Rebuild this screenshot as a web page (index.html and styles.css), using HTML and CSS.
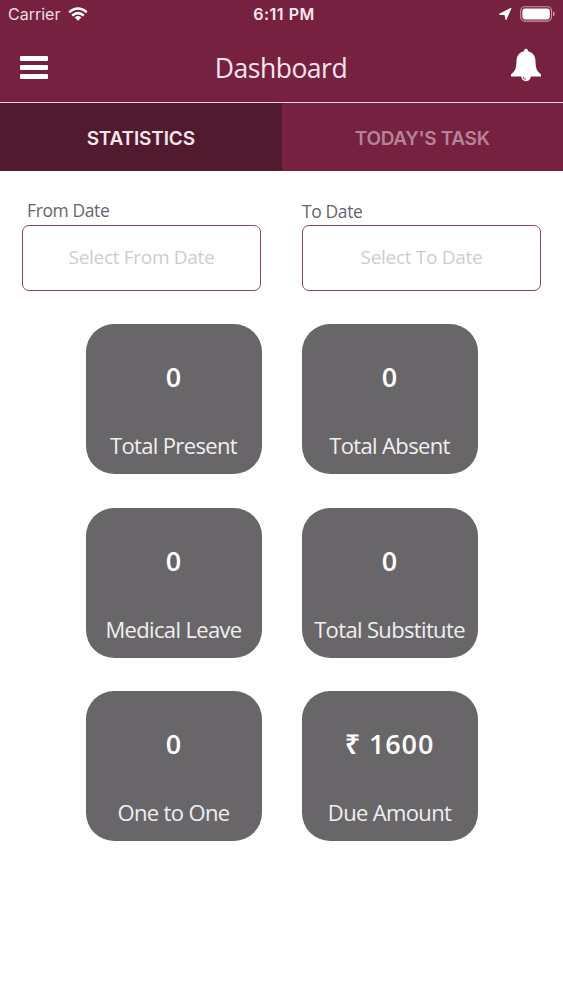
FILE: index.html
```html
<!DOCTYPE html>
<html lang="en">
<head>
    <meta charset="UTF-8">
    <meta name="viewport" content="width=device-width, initial-scale=1.0">
    <title>Dashboard</title>
    <link rel="stylesheet" href="styles.css">
</head>
<body>
    <header class="header">
        <div class="status-bar">
            <div class="status-left">
                <span class="carrier">Carrier</span>
                <svg class="wifi" width="20" height="14" viewBox="0 0 20 14" fill="none" stroke="#fff" stroke-width="2.5">
                    <path d="M1.2 5.2Q10-2.2 18.8 5.2"/>
                    <path d="M4.2 8.6Q10 3.6 15.8 8.6"/>
                    <path d="M6.7 10.4Q10 7.6 13.3 10.4L10 13.8Z" fill="#fff" stroke="none"/>
                </svg>
            </div>
            <span class="time">6:11 PM</span>
            <div class="status-right">
                <svg width="14" height="14" viewBox="0 0 14 14">
                    <path d="M13 1.2L8 12.6 6.9 7.6 1.4 7.2Z" fill="#fff" stroke="#fff" stroke-linejoin="round"/>
                </svg>
                <svg width="36" height="16" viewBox="0 0 36 16">
                    <rect x=".7" y=".7" width="30.8" height="14.4" rx="4" fill="none" stroke="#c798aa" stroke-width="1.1"/>
                    <rect x="2.4" y="2.4" width="27.4" height="11" rx="2.4" fill="#fff"/>
                    <path d="M33 5.3Q34.8 6 34.8 7.9T33 10.5Z" fill="#c798aa"/>
                </svg>
            </div>
        </div>
        <div class="nav-bar">
            <button class="menu-btn" aria-label="Menu">
                <span></span>
                <span></span>
                <span></span>
            </button>
            <h1>Dashboard</h1>
            <button class="bell-btn" aria-label="Notifications">
                <svg width="32" height="34" viewBox="0 0 32 34">
                    <path d="M16 .8C17.3.8 18 1.8 18 3.2C22.7 4.2 25.4 7.8 25.5 13C25.6 20.5 27 23.5 31 26.3V28.5H1V26.3C5 23.5 6.4 20.5 6.5 13C6.6 7.8 9.3 4.2 14 3.2C14 1.8 14.7.8 16 .8Z" fill="#fff"/>
                    <path d="M11.2 28C11.3 31.2 13.3 33.2 16 33.2S20.7 31.2 20.8 28Z" fill="#fff"/>
                    <path d="M13 28.8Q13.3 31.2 15.8 31.4" fill="none" stroke="#76213f" stroke-width=".9"/>
                </svg>
            </button>
        </div>
    </header>

    <nav class="tabs">
        <a class="tab active">STATISTICS</a>
        <a class="tab">TODAY'S TASK</a>
    </nav>

    <main class="content">
        <div class="dates">
            <div class="form-group">
                <label class="from-label">From Date</label>
                <div class="date-input"><span>Select From Date</span></div>
            </div>
            <div class="form-group">
                <label class="to-label">To Date</label>
                <div class="date-input"><span>Select To Date</span></div>
            </div>
        </div>

        <div class="cards">
            <div class="card">
                <strong>0</strong>
                <span>Total Present</span>
            </div>
            <div class="card">
                <strong>0</strong>
                <span>Total Absent</span>
            </div>
            <div class="card">
                <strong>0</strong>
                <span>Medical Leave</span>
            </div>
            <div class="card">
                <strong>0</strong>
                <span>Total Substitute</span>
            </div>
            <div class="card">
                <strong>0</strong>
                <span>One to One</span>
            </div>
            <div class="card">
                <strong class="amount">₹ 1600</strong>
                <span>Due Amount</span>
            </div>
        </div>
    </main>
</body>
</html>
```

FILE: styles.css
```css
* {
    box-sizing: border-box;
}
body {
    margin: 0;
    min-height: 1000px;
    background-color: #fff;
    font-family: "Open Sans", "Noto Sans", sans-serif;
}
.header {
    height: 103px;
    background-color: #76213f;
    border-bottom: 1px solid #ecd3dd;
    color: #fff;
}
.status-bar {
    display: grid;
    grid-template-columns: 1fr auto 1fr;
    align-items: center;
    height: 28px;
    padding: 0 7px 0 8px;
    font-family: Inter, "Liberation Sans", sans-serif;
    font-size: 16px;
}
.status-left, .status-right {
    display: flex;
    align-items: center;
}
.status-left {
    gap: 8px;
}
.carrier {
    color: #f3dbe4;
}
.status-right {
    justify-content: flex-end;
    gap: 8px;
}
.time {
    padding-left: 4px;
    font-weight: 600;
    letter-spacing: 0.5px;
    color: #fbeaf0;
}
.nav-bar {
    display: grid;
    grid-template-columns: 1fr auto 1fr;
    align-items: center;
    height: 74px;
    padding: 5px 21px 0 20px;
}
.nav-bar h1 {
    margin: 0;
    padding-top: 1px;
    font-size: 26.5px;
    line-height: 36px;
    font-weight: 400;
    letter-spacing: -0.5px;
    color: #fbe6ee;
}
button {
    padding: 0;
    border: none;
    background: none;
}
.menu-btn {
    display: flex;
    flex-direction: column;
    gap: 4px;
    width: 28px;
}
.menu-btn span {
    height: 5px;
    border-radius: 1px;
    background-color: #fff;
}
.bell-btn {
    justify-self: end;
    height: 34px;
    margin-top: -6px;
}
.tabs {
    display: flex;
    height: 68px;
    background-color: #76213f;
}
.tab {
    flex: 1;
    display: flex;
    align-items: center;
    justify-content: center;
    padding-top: 2px;
    font-family: Inter, "Liberation Sans", sans-serif;
    font-size: 19px;
    font-weight: 600;
    letter-spacing: -0.35px;
    color: #b58398;
}
.tab.active {
    background-color: #521a2f;
    letter-spacing: -0.15px;
    color: #f8e6ed;
}
.content {
    padding: 28px 22px 0;
}
.dates {
    display: grid;
    grid-template-columns: 239px 239px;
    justify-content: space-between;
}
.form-group label {
    display: block;
    height: 26px;
    line-height: 22px;
    font-size: 17.5px;
    letter-spacing: -0.4px;
    color: #66646a;
}
.form-group .from-label {
    padding-left: 5px;
}
.form-group .to-label {
    padding-top: 1px;
}
.date-input {
    display: flex;
    align-items: center;
    justify-content: center;
    height: 66px;
    padding-bottom: 2px;
    border: 1.5px solid #8d4560;
    border-radius: 7px;
    font-size: 19px;
    letter-spacing: -0.3px;
    color: #cdcdd1;
}
.cards {
    display: grid;
    grid-template-columns: 176px 176px;
    justify-content: center;
    gap: 33.5px 40px;
    margin-top: 33px;
}
.card {
    display: flex;
    flex-direction: column;
    align-items: center;
    justify-content: space-between;
    height: 150px;
    padding: 36px 0 14px;
    border-radius: 28px;
    background-color: #696669;
    color: #fff;
}
.card strong {
    font-size: 27px;
    line-height: 34px;
    font-weight: 600;
}
.card .amount {
    letter-spacing: 0.9px;
}
.card span {
    font-size: 22px;
    line-height: 30px;
    letter-spacing: -0.65px;
    color: #f0eff0;
    white-space: nowrap;
}
```
